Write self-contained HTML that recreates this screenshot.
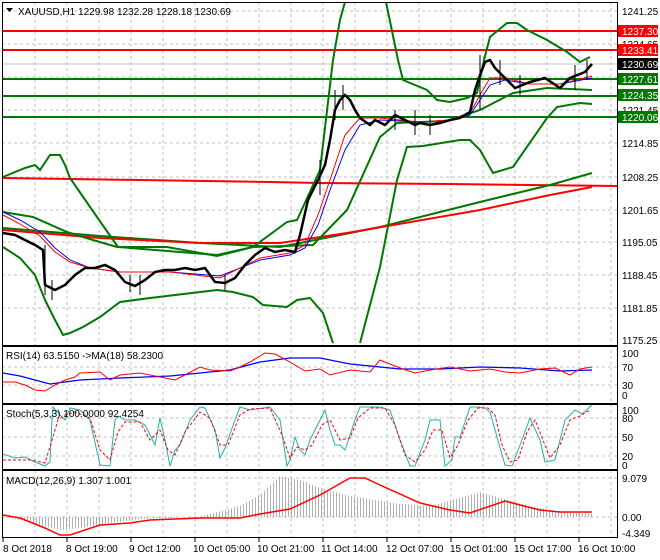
<!DOCTYPE html>
<html><head><meta charset="utf-8"><style>
html,body{margin:0;padding:0;background:#fff;}
svg{display:block;font-family:"Liberation Sans",sans-serif;font-size:10px;}
</style></head><body>
<svg width="660" height="560" viewBox="0 0 660 560" xmlns="http://www.w3.org/2000/svg">
<defs>
<pattern id="hs" width="3" height="10" patternUnits="userSpaceOnUse"><rect x="0" y="0" width="1" height="10" fill="#b0b0b0"/></pattern>
</defs>
<rect width="660" height="560" fill="#fff"/>
<g stroke="#c0c0c0" stroke-dasharray="3,3" stroke-width="1">
<path d="M35 2V537M67 2V537M99 2V537M131 2V537M163 2V537M195 2V537M227 2V537M259 2V537M291 2V537M323 2V537M355 2V537M387 2V537M419 2V537M451 2V537M483 2V537M515 2V537M547 2V537M579 2V537M611 2V537"/>
<path d="M2 11H617M2 44H617M2 77H617M2 110H617M2 143H617M2 177H617M2 210H617M2 242H617M2 275H617M2 308H617"/>
<path d="M2 367H617M2 385H617M2 418H617M2 437H617M2 456H617M2 478H617M2 517H617"/>
</g>
<g stroke-width="2" fill="none">
<path d="M2 31H617M2 50H617" stroke="#f00"/>
<path d="M2 79H617M2 96H617M2 117H617" stroke="#007800"/>
<path d="M2 64H617" stroke="#c0c0c0" stroke-width="1"/>
</g>
<g fill="none" stroke-width="2">
<polyline stroke="#f00" points="3,178 140,180 270,182 320,183 450,184 617,186"/>
<polyline stroke="#007800" points="3,228 100,236 200,243 280,247 380,227 480,202 550,185 592,173"/>
<polyline stroke="#f00" points="3,230 100,238 200,243 280,243 347,233 480,210 550,195 592,187"/>
<polyline stroke="#007800" points="3,177 25,168 35,165 40,170 50,155 60,155 65,165 70,178 97,217 118,247 217,255 253,247 287,222 297,220 320,170 333,60 340,20 345,2"/>
<polyline stroke="#007800" points="386,2 398,60 403,80 427,90 437,100 450,102 467,98 477,93 484,60 490,37 507,23 517,23 527,30 547,40 567,52 580,62 590,57"/>
<polyline stroke="#007800" points="3,212 33,217 67,232 93,240 117,247 167,247 217,256 253,247 313,245 347,210 380,137 397,123 420,122 447,121 480,110 513,93 547,88 592,90"/>
<polyline stroke="#007800" points="3,247 20,258 35,275 45,300 55,320 63,335 70,333 83,327 100,317 120,302 150,298 217,290 233,292 253,297 263,305 287,307 297,300 310,298 323,313 333,343"/>
<polyline stroke="#007800" points="360,343 380,267 397,180 407,147 423,146 460,140 470,140 480,150 493,173 513,167 547,118 557,107 580,103 592,104"/>
</g>
<g fill="none" stroke-width="1">
<polyline stroke="#00f" points="3,212 20,220 40,232 55,248 70,260 90,268 120,272 170,272 220,276 260,260 290,255 305,248 318,225 330,190 345,150 360,125 380,120 420,122 450,120 470,115 480,100 490,85 505,80 530,84 560,84 592,78"/>
<polyline stroke="#f00" points="3,215 20,224 40,236 55,252 70,262 90,268 120,272 170,272 220,278 260,258 290,253 305,245 318,215 330,180 345,135 360,118 380,118 420,122 450,120 470,113 480,95 490,78 505,78 530,84 560,84 592,76"/>
</g>
<polyline fill="none" stroke="#000" stroke-width="2.5" points="3,233 15,235 25,240 35,245 43,250 45,285 55,290 65,285 75,275 85,268 95,268 105,265 115,270 125,282 135,286 145,280 155,272 165,270 175,270 185,268 195,270 205,268 215,282 225,283 235,278 245,265 255,255 265,248 275,252 285,250 295,252 300,235 308,200 318,180 325,165 330,140 335,110 340,100 345,95 350,100 355,110 360,118 370,125 375,120 385,125 395,115 405,120 415,125 420,123 430,125 440,123 450,120 460,118 470,112 475,90 480,75 485,62 490,60 495,68 505,78 515,88 530,82 545,78 560,88 570,78 585,72 592,64"/>
<g stroke="#000" stroke-width="1"><path d="M52 280V300M140 275V295M335 90V120M343 85V110M415 110V135M430 115V135M480 55V110M520 75V95M575 65V90M587 60V80M45 245V295M130 275V292M225 275V290M320 160V195M395 110V130M500 60V85"/></g>
<g fill="none" stroke="#000" stroke-width="1">
<rect x="2.5" y="2.5" width="615" height="343"/>
<rect x="2.5" y="346.5" width="615" height="57"/>
<rect x="2.5" y="404.5" width="615" height="65"/>
<rect x="2.5" y="470.5" width="615" height="67"/>
</g>
<polyline fill="none" stroke="#00f" stroke-width="1.3" points="3,373 20,376 50,384 80,380 120,378 170,376 200,373 230,370 260,362 290,358 320,358 350,364 400,369 440,369 480,367 520,368 560,371 592,370"/>
<polyline fill="none" stroke="#f00" stroke-width="1" points="3,382 15,382 25,385 35,390 45,391 55,385 65,380 75,377 80,373 100,372 110,380 120,375 140,373 160,377 175,380 185,375 200,367 210,370 230,371 240,367 250,362 265,353 275,354 290,362 305,371 320,369 330,375 350,370 370,372 380,360 390,364 400,368 415,373 430,370 450,367 470,371 490,369 505,372 520,373 540,369 555,368 570,375 580,369 592,367"/>
<polyline fill="none" stroke="#20b2aa" stroke-width="1" points="3,454 15,458 25,457 35,462 45,466 50,462 52,420 53,407 60,415 65,420 70,408 80,410 90,420 100,465 110,466 115,420 118,416 125,420 135,420 145,425 155,445 160,418 165,440 170,466 175,450 180,445 190,420 200,407 205,408 215,430 220,458 225,448 235,420 240,407 250,410 270,407 280,420 287,466 290,460 295,437 300,450 305,455 310,440 320,420 325,410 330,430 335,445 340,445 345,450 355,420 360,407 380,407 390,410 400,440 410,466 415,466 425,440 430,420 440,420 445,466 452,460 455,437 460,437 470,407 478,407 485,408 490,412 495,430 505,465 512,466 520,445 530,418 540,440 545,462 555,460 565,420 575,410 582,414 592,405"/>
<polyline fill="none" stroke="#f00" stroke-width="1" stroke-dasharray="3,2" points="3,460 15,460 30,460 45,463 52,440 58,420 65,415 75,412 90,418 100,450 110,460 118,432 125,422 140,422 150,440 160,430 168,450 175,455 185,432 200,412 210,418 220,445 228,445 240,415 250,409 270,408 282,435 290,458 297,447 305,450 312,445 322,425 330,420 340,440 350,438 358,418 370,408 385,408 395,425 405,455 415,462 425,450 433,430 442,430 450,458 458,445 468,420 478,408 488,408 495,415 502,445 510,462 518,460 527,432 535,420 543,440 550,458 560,445 570,420 580,416 590,410"/>
<polygon fill="url(#hs)" points="3,517 20,520 40,525 60,530 80,528 110,523 140,519 200,517 210,514 240,506 260,495 280,476 300,480 320,488 350,496 400,504 430,506 460,498 480,492 500,498 530,506 560,512 592,514 592,517"/>
<polyline fill="none" stroke="#f00" stroke-width="1.5" points="3,515 20,518 45,528 60,535 70,535 100,525 130,523 150,520 200,518 240,518 260,514 290,509 320,495 350,478 365,478 380,485 420,503 450,510 470,513 505,501 520,505 540,510 560,512 592,512"/>
<g fill="#000">
<text x="622" y="15">1241.25</text><text x="622" y="48">1234.65</text><text x="622" y="114">1221.45</text><text x="622" y="147">1214.85</text><text x="622" y="181">1208.25</text><text x="622" y="214">1201.65</text><text x="622" y="246">1195.05</text><text x="622" y="279">1188.45</text><text x="622" y="312">1181.85</text><text x="622" y="344">1175.25</text>
<text x="622" y="357">100</text><text x="622" y="371">70</text><text x="622" y="389">30</text><text x="622" y="399">0</text>
<text x="622" y="414">100</text><text x="622" y="422">80</text><text x="622" y="441">50</text><text x="622" y="460">20</text><text x="622" y="469">0</text>
<text x="622" y="482">9.079</text><text x="622" y="521">0.00</text><text x="622" y="537">-4.349</text>
</g>
<g>
<rect x="618" y="25" width="40" height="12" fill="#f00"/><text x="622" y="35" fill="#fff">1237.30</text>
<rect x="618" y="44" width="40" height="12" fill="#f00"/><text x="622" y="54" fill="#fff">1233.41</text>
<rect x="618" y="58" width="40" height="12" fill="#000"/><text x="622" y="68" fill="#fff">1230.69</text>
<rect x="618" y="73" width="40" height="12" fill="#007800"/><text x="622" y="83" fill="#fff">1227.61</text>
<rect x="618" y="89" width="40" height="12" fill="#007800"/><text x="622" y="99" fill="#fff">1224.35</text>
<rect x="618" y="111" width="40" height="12" fill="#007800"/><text x="622" y="121" fill="#fff">1220.06</text>
</g>
<path d="M6 8h7l-3.5 4z" fill="#000"/>
<text x="18" y="15" fill="#000">XAUUSD,H1  1229.98 1232.28 1228.18 1230.69</text>
<text x="6" y="359" fill="#000">RSI(14) 63.5150  -&gt;MA(18) 58.2300</text>
<text x="6" y="417" fill="#000">Stoch(5,3,3) 100.0000 92.4254</text>
<text x="6" y="484" fill="#000">MACD(12,26,9) 1.307 1.001</text>
<g stroke="#000"><path d="M3 538v4M67 538v4M131 538v4M195 538v4M259 538v4M323 538v4M387 538v4M451 538v4M515 538v4M579 538v4"/></g>
<g fill="#000">
<text x="3" y="552">8 Oct 2018</text><text x="66" y="552">8 Oct 19:00</text><text x="129" y="552">9 Oct 12:00</text><text x="193" y="552">10 Oct 05:00</text><text x="257" y="552">10 Oct 21:00</text><text x="321" y="552">11 Oct 14:00</text><text x="386" y="552">12 Oct 07:00</text><text x="450" y="552">15 Oct 01:00</text><text x="514" y="552">15 Oct 17:00</text><text x="578" y="552">16 Oct 10:00</text>
</g>
</svg>
</body></html>
